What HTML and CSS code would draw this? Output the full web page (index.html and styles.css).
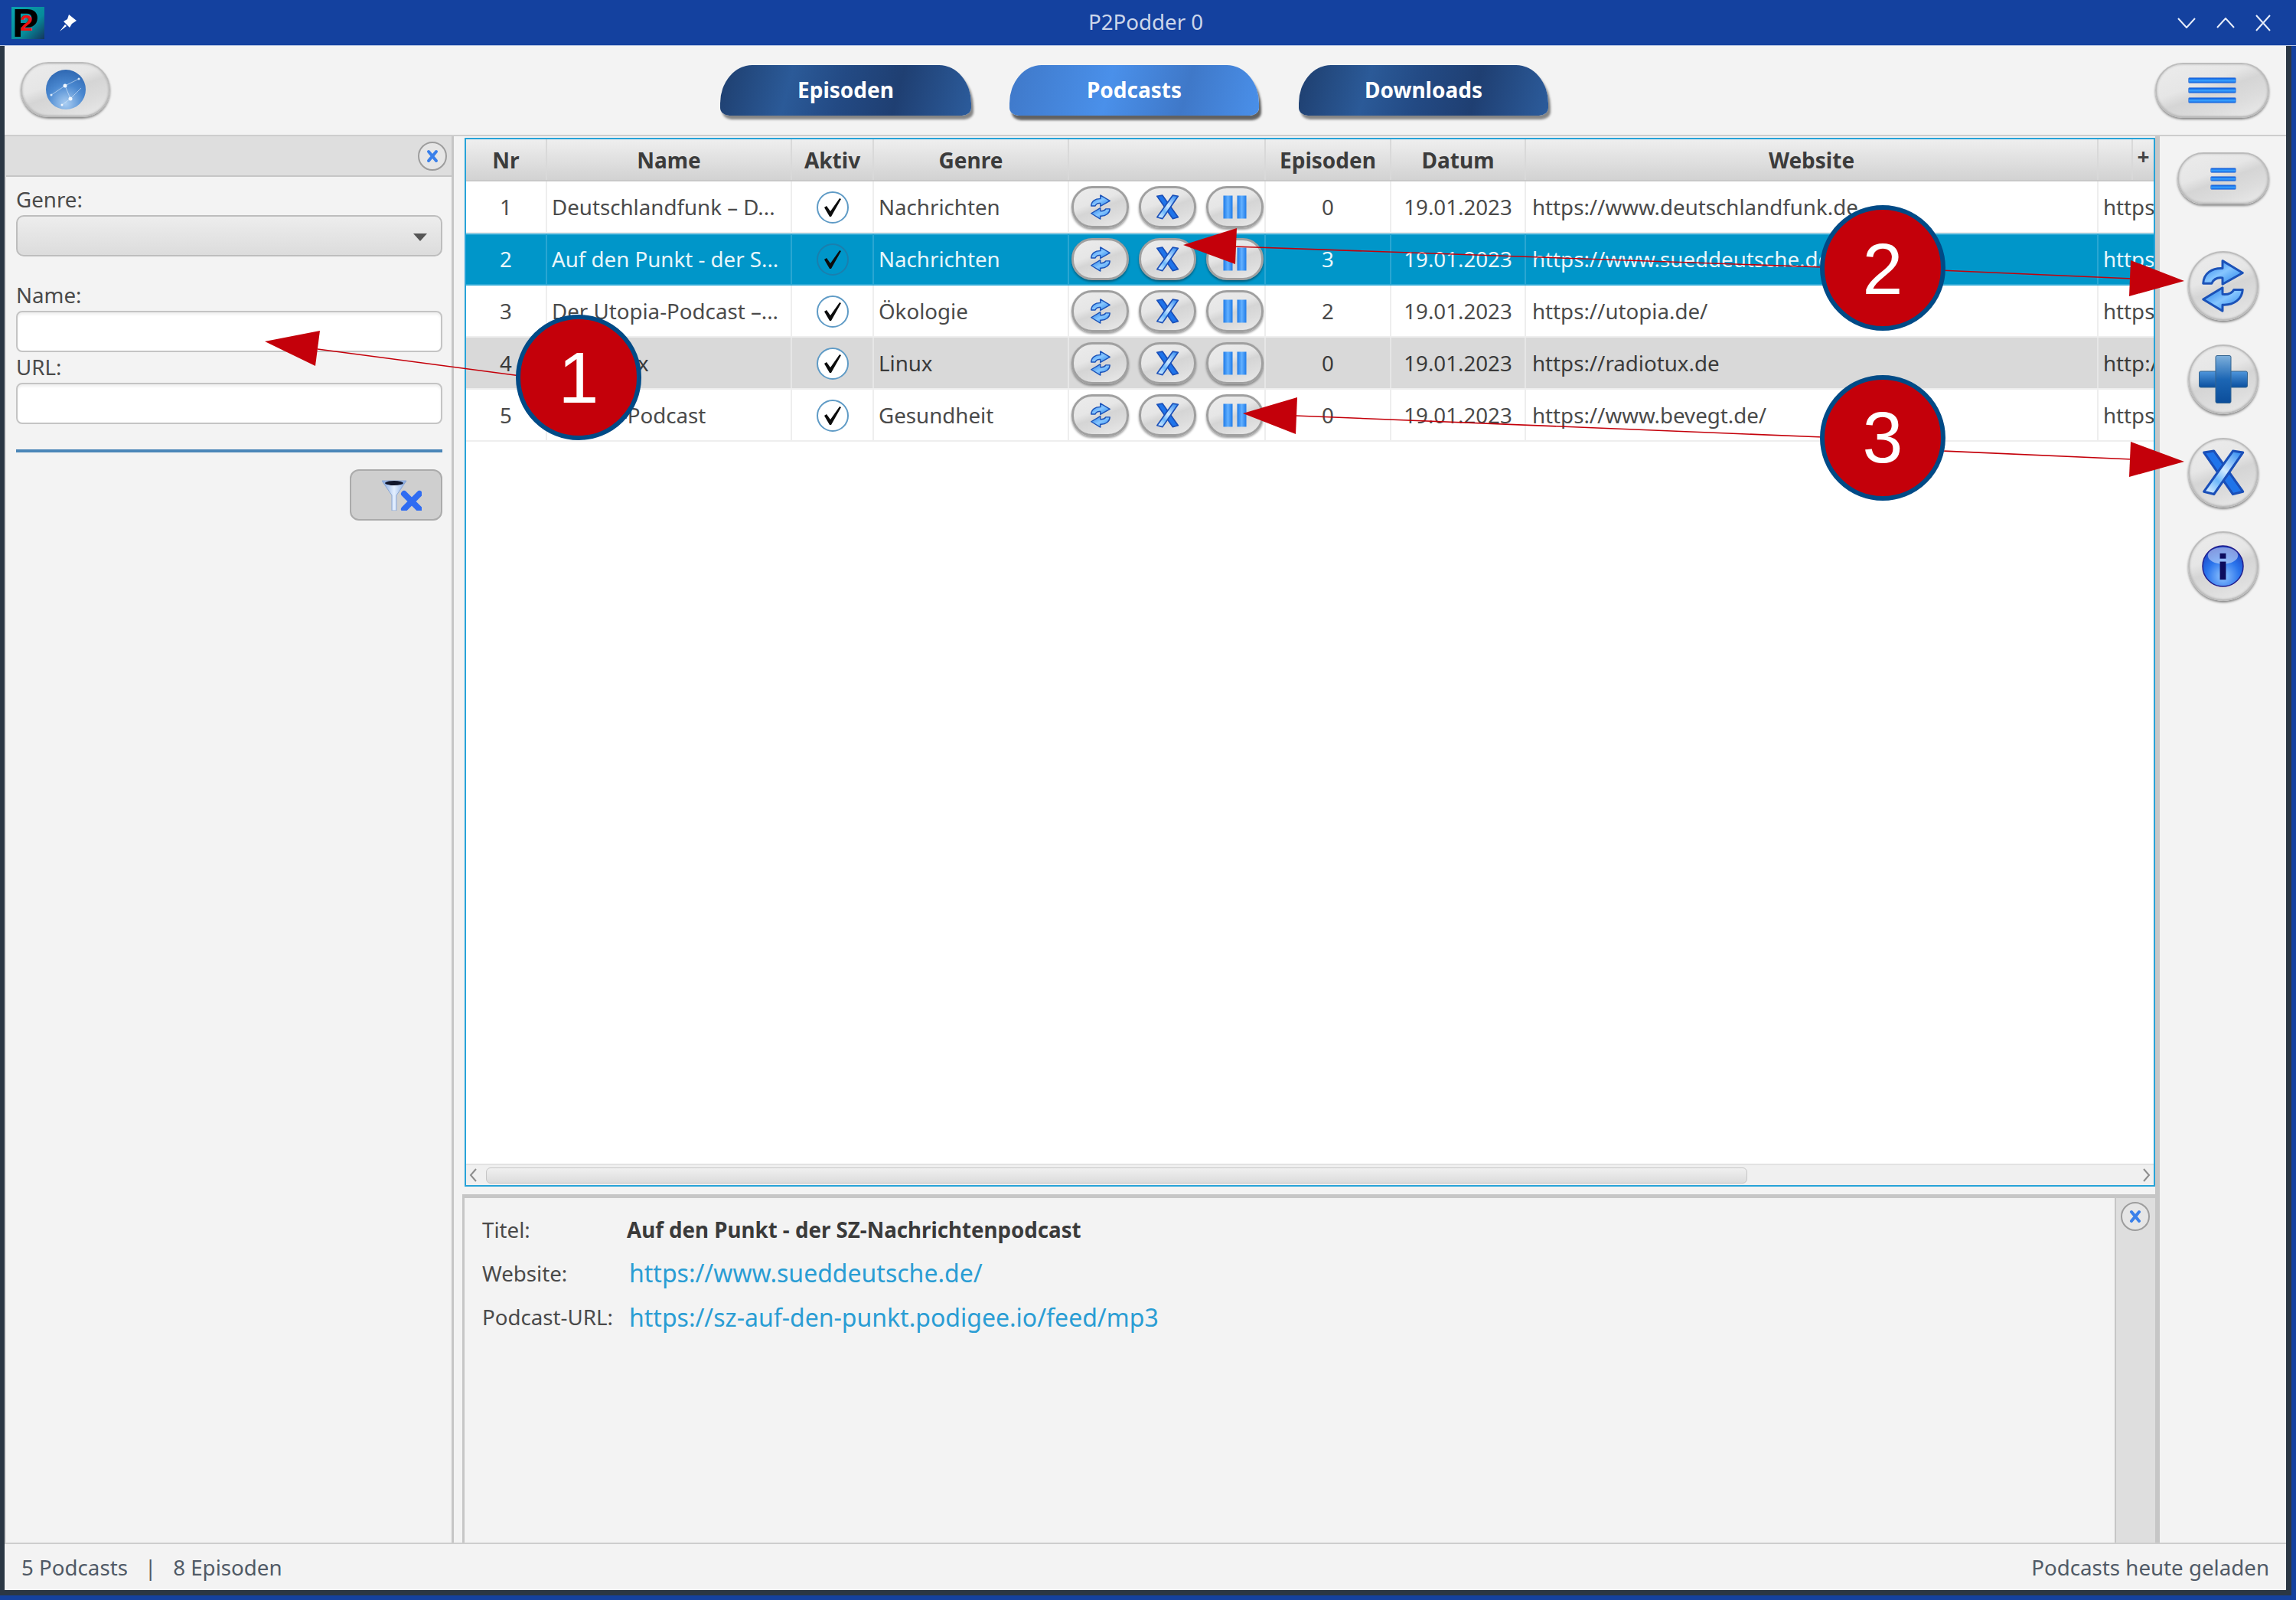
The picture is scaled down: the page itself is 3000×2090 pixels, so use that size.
FILE: index.html
```html
<!DOCTYPE html>
<html lang="de">
<head>
    <meta charset="UTF-8">
    <title>P2Podder 0</title>
    <link rel="stylesheet" href="styles.css">
</head>
<body>
    <!-- shared icons -->
    <svg class="icon-defs" aria-hidden="true">
        <defs>
            <linearGradient id="g-arrow" x1="0" y1="0" x2="1" y2="1">
                <stop offset="0" stop-color="#1f7ae8"/>
                <stop offset="0.5" stop-color="#86c6ff"/>
                <stop offset="1" stop-color="#1f7ee8"/>
            </linearGradient>
            <linearGradient id="g-x" gradientUnits="userSpaceOnUse" x1="145" y1="18" x2="22" y2="159">
                <stop offset="0" stop-color="#3f94f2"/>
                <stop offset="0.45" stop-color="#cfe9ff"/>
                <stop offset="0.7" stop-color="#6db8fb"/>
                <stop offset="1" stop-color="#d5ecff"/>
            </linearGradient>
            <linearGradient id="g-bar" x1="0" y1="0" x2="1" y2="0">
                <stop offset="0" stop-color="#1f7be8"/>
                <stop offset="0.5" stop-color="#62b0ff"/>
                <stop offset="1" stop-color="#1f7be8"/>
            </linearGradient>
            <linearGradient id="g-plus-h" x1="0" y1="0" x2="0" y2="1">
                <stop offset="0" stop-color="#4f96dc"/>
                <stop offset="1" stop-color="#0a4f9e"/>
            </linearGradient>
            <linearGradient id="g-plus-v" x1="0" y1="0" x2="0" y2="1">
                <stop offset="0" stop-color="#7eb0dc"/>
                <stop offset="0.5" stop-color="#1c66b4"/>
                <stop offset="1" stop-color="#0b4d9a"/>
            </linearGradient>
            <radialGradient id="g-info" cx="0.5" cy="0.75" r="0.75">
                <stop offset="0" stop-color="#8fc4ff"/>
                <stop offset="0.55" stop-color="#2a74ec"/>
                <stop offset="1" stop-color="#1b3fc0"/>
            </radialGradient>
            <radialGradient id="g-globe" cx="0.5" cy="0.85" r="0.85">
                <stop offset="0" stop-color="#a9cdf2"/>
                <stop offset="0.55" stop-color="#4a88d0"/>
                <stop offset="1" stop-color="#2f68b2"/>
            </radialGradient>
            <linearGradient id="g-logo" x1="0" y1="0" x2="1" y2="1">
                <stop offset="0" stop-color="#0aa3ad"/>
                <stop offset="0.6" stop-color="#078b9a"/>
                <stop offset="1" stop-color="#14345c"/>
            </linearGradient>
            <linearGradient id="g-funnel" x1="0" y1="0" x2="1" y2="0">
                <stop offset="0" stop-color="#7ea4e0"/>
                <stop offset="0.5" stop-color="#e4efff"/>
                <stop offset="1" stop-color="#7ea4e0"/>
            </linearGradient>
        </defs>
        <symbol id="ico-sync" viewBox="-5 -5 167 210">
            <path d="M77 0 L157 48 L77 93 L77 68 C55 65 42 72 34 90 L0 90 C2 50 35 28 77 30 Z" fill="url(#g-arrow)" stroke="#1b52b8" stroke-width="9" stroke-linejoin="round"/>
            <path d="M0 153 L77 107 L77 133 C100 135 115 128 122 115 L157 115 C155 150 125 178 77 175 L77 200 Z" fill="url(#g-arrow)" stroke="#1b52b8" stroke-width="9" stroke-linejoin="round"/>
        </symbol>
        <symbol id="ico-x" viewBox="0 0 167 177">
            <path d="M10 12 L48 6 L158 160 L120 170 Z" fill="#1f74ea" stroke="#1a4fb8" stroke-width="9" stroke-linejoin="round"/>
            <path d="M120 6 L158 12 L48 170 L10 160 Z" fill="url(#g-x)" stroke="#1a4fb8" stroke-width="9" stroke-linejoin="round"/>
        </symbol>
        <symbol id="ico-pause" viewBox="0 0 31 31">
            <rect x="0.5" y="0.5" width="12" height="30" fill="url(#g-bar)"/>
            <rect x="18.5" y="0.5" width="12" height="30" fill="url(#g-bar)"/>
        </symbol>
        <symbol id="ico-plus" viewBox="0 0 64 63">
            <rect x="0.5" y="21" width="63" height="21" rx="2" fill="url(#g-plus-h)" stroke="#35648f"/>
            <rect x="22" y="0.5" width="20" height="62" rx="2" fill="url(#g-plus-v)" stroke="#35648f"/>
        </symbol>
        <symbol id="ico-info" viewBox="0 0 56 56">
            <circle cx="28" cy="28" r="27" fill="url(#g-info)" stroke="#231e8c" stroke-width="1.5"/>
            <ellipse cx="28" cy="14" rx="20" ry="11" fill="#fff" opacity="0.45"/>
            <rect x="24" y="11" width="8" height="7" fill="#0c0c5e"/>
            <rect x="24" y="22" width="8" height="24" fill="#0c0c5e"/>
        </symbol>
        <symbol id="ico-close" viewBox="0 0 16 18">
            <path d="M3 3 L13 15 M13 3 L3 15" stroke="#3a80ea" stroke-width="4" stroke-linecap="round"/>
        </symbol>
        <symbol id="ico-check" viewBox="2 2 38 38">
            <path d="M10 21 L13 19 L18 26 L30 9 L32 10 L19 33 L17 33 Z" fill="#0c0c0c"/>
        </symbol>
    </svg>

    <div class="window">
        <header class="titlebar">
            <div class="titlebar-left">
                <svg class="logo" viewBox="0 0 43 42">
                    <rect width="43" height="42" fill="url(#g-logo)"/>
                    <text x="1" y="39" class="logo-p">P</text>
                    <text x="11" y="31" class="logo-2">2</text>
                </svg>
                <svg class="pin" viewBox="0 0 24 24">
                    <path d="M13 1 L23 9 L17 13 L14 18 L6 10 L11 7 Z M8 14 L1 23 L10 16 Z" fill="#fff"/>
                </svg>
            </div>
            <div class="window-title">P2Podder 0</div>
            <div class="window-controls">
                <svg viewBox="0 0 24 14"><path d="M1 1 L12 13 L23 1" /></svg>
                <svg viewBox="0 0 24 14"><path d="M1 13 L12 1 L23 13" /></svg>
                <svg viewBox="0 0 20 22"><path d="M1 1 L19 21 M19 1 L1 21" /></svg>
            </div>
        </header>

        <div class="frame">
            <div class="toolbar">
                <button class="gloss gloss-wide">
                    <svg class="globe" viewBox="0 0 52 52">
                        <circle cx="26" cy="26" r="26" fill="url(#g-globe)"/>
                        <path d="M7 33 L25 21 L32 38 L21 46 M25 21 L43 12 M32 38 L46 24" stroke="#dbe9fa" stroke-width="1" opacity="0.6" fill="none"/>
                        <circle cx="25" cy="21" r="2.5" fill="#f2f7fd"/>
                        <circle cx="32" cy="38" r="2.5" fill="#f2f7fd"/>
                        <circle cx="21" cy="46" r="1.5" fill="#f2f7fd"/>
                        <circle cx="7" cy="33" r="1.5" fill="#dce9f8"/>
                        <circle cx="43" cy="12" r="1.5" fill="#dce9f8"/>
                    </svg>
                </button>
                <nav class="tabs">
                    <button class="tab">Episoden</button>
                    <button class="tab tab-active">Podcasts</button>
                    <button class="tab tab-last">Downloads</button>
                </nav>
                <button class="gloss gloss-wide gloss-menu">
                    <span class="bars bars-big"><i></i><i></i><i></i></span>
                </button>
            </div>

            <div class="main">
                <aside class="filter">
                    <div class="panel-head">
                        <button class="close-btn"><svg><use href="#ico-close"/></svg></button>
                    </div>
                    <div class="filter-body">
                        <label class="field-label">Genre:</label>
                        <div class="combo"><span class="combo-arrow"></span></div>
                        <label class="field-label field-name">Name:</label>
                        <input class="text-input" type="text">
                        <label class="field-label field-url">URL:</label>
                        <input class="text-input" type="text">
                        <div class="separator"></div>
                        <button class="clear-filter">
                            <svg viewBox="0 0 52 40">
                                <path d="M0 1 H32 L19 20 V40 H13 V20 Z" fill="url(#g-funnel)" stroke="#8aa6d4"/>
                                <ellipse cx="16" cy="4" rx="12" ry="3" fill="#10162c"/>
                                <path d="M29 18 L49 38 M49 18 L29 38" stroke="#2f6cf2" stroke-width="8" stroke-linecap="round"/>
                            </svg>
                        </button>
                    </div>
                </aside>

                <section class="center">
                    <div class="table-box">
                        <div class="table-scroll">
                            <table class="podcasts">
                                <colgroup>
                                    <col class="c-nr"><col class="c-name"><col class="c-active"><col class="c-genre"><col class="c-actions">
                                    <col class="c-episodes"><col class="c-date"><col class="c-site"><col class="c-url"><col class="c-plus">
                                </colgroup>
                                <thead>
                                    <tr>
                                        <th>Nr</th><th>Name</th><th>Aktiv</th><th>Genre</th><th></th>
                                        <th>Episoden</th><th>Datum</th><th>Website</th><th></th><th class="th-plus">+</th>
                                    </tr>
                                </thead>
                                <tbody>
                                    <tr>
                                        <td class="num">1</td><td>Deutschlandfunk – D...</td>
                                        <td class="check"><span class="checkmark"><svg><use href="#ico-check"/></svg></span></td>
                                        <td>Nachrichten</td>
                                        <td class="actions"><div class="row-btns">
                                            <button class="gloss gloss-row"><svg class="i-sync"><use href="#ico-sync"/></svg></button>
                                            <button class="gloss gloss-row"><svg class="i-x"><use href="#ico-x"/></svg></button>
                                            <button class="gloss gloss-row"><svg class="i-pause"><use href="#ico-pause"/></svg></button>
                                        </div></td>
                                        <td class="num">0</td><td class="date">19.01.2023</td>
                                        <td class="site">https://www.deutschlandfunk.de</td><td class="last" colspan="2">https://www.deutschlandfunk.de/</td>
                                    </tr>
                                    <tr class="selected">
                                        <td class="num">2</td><td>Auf den Punkt - der S...</td>
                                        <td class="check"><span class="checkmark"><svg><use href="#ico-check"/></svg></span></td>
                                        <td>Nachrichten</td>
                                        <td class="actions"><div class="row-btns">
                                            <button class="gloss gloss-row"><svg class="i-sync"><use href="#ico-sync"/></svg></button>
                                            <button class="gloss gloss-row"><svg class="i-x"><use href="#ico-x"/></svg></button>
                                            <button class="gloss gloss-row"><svg class="i-pause"><use href="#ico-pause"/></svg></button>
                                        </div></td>
                                        <td class="num">3</td><td class="date">19.01.2023</td>
                                        <td class="site">https://www.sueddeutsche.de/</td><td class="last" colspan="2">https://sz-auf-den-punkt.podigee.io/feed/mp3</td>
                                    </tr>
                                    <tr>
                                        <td class="num">3</td><td>Der Utopia-Podcast –...</td>
                                        <td class="check"><span class="checkmark"><svg><use href="#ico-check"/></svg></span></td>
                                        <td>Ökologie</td>
                                        <td class="actions"><div class="row-btns">
                                            <button class="gloss gloss-row"><svg class="i-sync"><use href="#ico-sync"/></svg></button>
                                            <button class="gloss gloss-row"><svg class="i-x"><use href="#ico-x"/></svg></button>
                                            <button class="gloss gloss-row"><svg class="i-pause"><use href="#ico-pause"/></svg></button>
                                        </div></td>
                                        <td class="num">2</td><td class="date">19.01.2023</td>
                                        <td class="site">https://utopia.de/</td><td class="last" colspan="2">https://utopia.de/</td>
                                    </tr>
                                    <tr class="striped">
                                        <td class="num">4</td><td>Radio Tux</td>
                                        <td class="check"><span class="checkmark"><svg><use href="#ico-check"/></svg></span></td>
                                        <td>Linux</td>
                                        <td class="actions"><div class="row-btns">
                                            <button class="gloss gloss-row"><svg class="i-sync"><use href="#ico-sync"/></svg></button>
                                            <button class="gloss gloss-row"><svg class="i-x"><use href="#ico-x"/></svg></button>
                                            <button class="gloss gloss-row"><svg class="i-pause"><use href="#ico-pause"/></svg></button>
                                        </div></td>
                                        <td class="num">0</td><td class="date">19.01.2023</td>
                                        <td class="site">https://radiotux.de</td><td class="last" colspan="2">http://radiotux.de/</td>
                                    </tr>
                                    <tr>
                                        <td class="num">5</td><td>Bevegt-Podcast</td>
                                        <td class="check"><span class="checkmark"><svg><use href="#ico-check"/></svg></span></td>
                                        <td>Gesundheit</td>
                                        <td class="actions"><div class="row-btns">
                                            <button class="gloss gloss-row"><svg class="i-sync"><use href="#ico-sync"/></svg></button>
                                            <button class="gloss gloss-row"><svg class="i-x"><use href="#ico-x"/></svg></button>
                                            <button class="gloss gloss-row"><svg class="i-pause"><use href="#ico-pause"/></svg></button>
                                        </div></td>
                                        <td class="num">0</td><td class="date">19.01.2023</td>
                                        <td class="site">https://www.bevegt.de/</td><td class="last" colspan="2">https://www.bevegt.de/</td>
                                    </tr>
                                </tbody>
                            </table>
                        </div>
                        <div class="hbar">
                            <svg class="hbar-arrow" viewBox="0 0 12 20"><path d="M10 2 L3 10 L10 18"/></svg>
                            <div class="hbar-track"><div class="hbar-thumb"></div></div>
                            <svg class="hbar-arrow" viewBox="0 0 12 20"><path d="M2 2 L9 10 L2 18"/></svg>
                        </div>
                    </div>

                    <div class="details">
                        <div class="details-body">
                            <div class="details-grid">
                                <span>Titel:</span><strong>Auf den Punkt - der SZ-Nachrichtenpodcast</strong>
                                <span>Website:</span><a class="details-link">https://www.sueddeutsche.de/</a>
                                <span>Podcast-URL:</span><a class="details-link">https://sz-auf-den-punkt.podigee.io/feed/mp3</a>
                            </div>
                        </div>
                        <div class="details-strip">
                            <button class="close-btn"><svg><use href="#ico-close"/></svg></button>
                        </div>
                    </div>
                </section>

                <aside class="tools">
                    <button class="gloss gloss-strip"><span class="bars"><i></i><i></i><i></i></span></button>
                    <button class="gloss gloss-round gloss-first"><svg class="i-sync-big"><use href="#ico-sync"/></svg></button>
                    <button class="gloss gloss-round"><svg class="i-plus-big"><use href="#ico-plus"/></svg></button>
                    <button class="gloss gloss-round"><svg class="i-x-big"><use href="#ico-x"/></svg></button>
                    <button class="gloss gloss-round"><svg class="i-info-big"><use href="#ico-info"/></svg></button>
                </aside>
            </div>

            <footer class="status">
                <div class="status-left"><span>5 Podcasts</span><span>|</span><span>8 Episoden</span></div>
                <div>Podcasts heute geladen</div>
            </footer>
        </div>
    </div>

    <!-- red callouts lying over the window -->
    <svg class="callouts" viewBox="0 0 3000 2090">
        <g class="callout-lines">
            <path d="M415 456 L680 491"/>
            <path d="M1612 322 L2382 349"/>
            <path d="M2534 353 L2786 364"/>
            <path d="M1692 543 L2382 571"/>
            <path d="M2537 589 L2786 600"/>
        </g>
        <g class="callout-heads">
            <polygon points="346,446 418,432 412,478"/>
            <polygon points="1546,320 1616,298 1614,345"/>
            <polygon points="2854,367 2784,340 2782,387"/>
            <polygon points="1624,540 1695,519 1693,567"/>
            <polygon points="2854,603 2784,577 2782,623"/>
        </g>
        <g class="callout-dots">
            <circle cx="756" cy="493" r="79"/>
            <circle cx="2460" cy="350" r="79"/>
            <circle cx="2460" cy="572" r="79"/>
        </g>
        <g class="callout-nums">
            <text x="756" y="526">1</text>
            <text x="2460" y="384">2</text>
            <text x="2460" y="604">3</text>
        </g>
    </svg>
</body>
</html>
```

FILE: styles.css
```css
body {
    margin: 0;
    width: 3000px;
    height: 2090px;
    overflow: hidden;
    position: relative;
    font-family: "Noto Sans", sans-serif;
    font-size: 27.7px;
    color: #4a4a4a;
}
button {
    padding: 0;
    font-family: inherit;
}
.icon-defs {
    position: absolute;
    width: 0;
    height: 0;
}
.window {
    width: 3000px;
    height: 2090px;
    background: #14419f;
    display: flex;
    flex-direction: column;
}

/* title bar */
.titlebar {
    height: 59px;
    display: grid;
    grid-template-columns: 1fr auto 1fr;
    align-items: center;
    border-bottom: 1px solid #b9c7e4;
}
.titlebar-left {
    display: flex;
    align-items: center;
    padding-left: 15px;
    gap: 19px;
}
.logo {
    width: 43px;
    height: 42px;
}
.logo-p {
    font-family: "Liberation Sans", sans-serif;
    font-weight: bold;
    font-size: 52px;
    fill: #000;
}
.logo-2 {
    font-family: "Liberation Sans", sans-serif;
    font-weight: bold;
    font-size: 30px;
    fill: #f01010;
}
.pin {
    width: 24px;
    height: 24px;
}
.window-title {
    font-size: 27.7px;
    line-height: 54px;
    padding-bottom: 4px;
    margin-left: -6px;
    color: #ccd6ea;
}
.window-controls {
    display: flex;
    justify-content: flex-end;
    align-items: center;
    gap: 27px;
    padding-right: 33px;
}
.window-controls svg {
    width: 24px;
    height: 14px;
    fill: none;
    stroke: #e8eefa;
    stroke-width: 2;
}
.window-controls svg:last-child {
    width: 20px;
    height: 22px;
}

/* app frame */
.frame {
    flex: 1;
    margin: 0 6px 6px 0;
    border-left: 6px solid #2b3744;
    border-right: 7px solid #2b3744;
    border-bottom: 7px solid #2b3744;
    background: #f3f3f3;
    display: flex;
    flex-direction: column;
    min-height: 0;
}
.toolbar {
    height: 116px;
    box-sizing: border-box;
    display: flex;
    padding: 21px 22px 0 21px;
    flex-shrink: 0;
}

/* grey glossy buttons */
.gloss {
    display: flex;
    align-items: center;
    justify-content: center;
    box-sizing: border-box;
    flex-shrink: 0;
    border: 2px solid #bcbcbc;
    background: linear-gradient(160deg, #ececec 0%, #e6e6e6 38%, #d5d5d5 52%, #dcdcdc 72%, #ebebeb 100%);
    box-shadow: 0 2px 3px rgba(0, 0, 0, 0.45), inset 0 0 3px rgba(0, 0, 0, 0.2);
}
.gloss-wide {
    width: 117px;
    height: 72px;
    border-radius: 36px / 36px;
}
.gloss-menu {
    width: 149px;
    margin-left: auto;
    margin-top: 1px;
}
.gloss-strip {
    width: 120px;
    height: 68px;
    border-radius: 34px;
}
.gloss-round {
    width: 92px;
    height: 91px;
    border-radius: 50%;
    margin-top: 31px;
}
.gloss-row {
    width: 75px;
    height: 55px;
    border-radius: 27px;
    border: 3px solid #a0a0a0;
    box-shadow: 0 2px 3px rgba(0, 0, 0, 0.4);
}
.globe {
    width: 52px;
    height: 52px;
}
.bars {
    display: flex;
    flex-direction: column;
    gap: 4px;
    width: 34px;
}
.bars i {
    display: block;
    height: 7px;
    border-radius: 2px;
    background: linear-gradient(#0f5edc, #3aa2ff 55%, #1468e0);
    border: 1px solid #6d93d8;
    box-sizing: border-box;
}
.bars-big {
    width: 63px;
    gap: 5px;
}
.bars-big i {
    height: 8px;
}

/* top tabs */
.tabs {
    display: flex;
    gap: 50px;
    margin: 4px 0 0 797px;
}
.tab {
    width: 328px;
    height: 66px;
    border: none;
    border-radius: 42px 42px 12px 12px / 50px 50px 10px 10px;
    background: linear-gradient(105deg, #1e3e6e 0%, #2b5a98 28%, #234a84 48%, #1f3f72 70%, #2c5c9c 100%);
    box-shadow: 3px 5px 3px rgba(0, 0, 0, 0.45);
    color: #fff;
    font-size: 28px;
    font-weight: bold;
    line-height: 30px;
    padding-bottom: 3px;
}
.tab-active {
    width: 326px;
    margin-right: 2px;
    background: linear-gradient(105deg, #3f78c8 0%, #4a90ea 40%, #3f78c8 70%, #4a90ea 100%);
    box-shadow: 3px 6px 3px rgba(0, 0, 0, 0.6);
}
.tab-last {
    width: 326px;
}

.main {
    flex: 1;
    display: flex;
    min-height: 0;
    border-top: 2px solid #cdcdcd;
    border-bottom: 2px solid #cdcdcd;
}

/* left filter panel */
.filter {
    width: 587px;
    box-sizing: border-box;
    flex-shrink: 0;
    margin-right: 14px;
    border-right: 3px solid #c6c6c6;
    border-left: 2px solid #d8d8d8;
}
.panel-head {
    height: 53px;
    box-sizing: border-box;
    background: #dedede;
    border-bottom: 2px solid #c6c6c6;
    display: flex;
    align-items: center;
    justify-content: flex-end;
    padding-right: 6px;
}
.close-btn {
    width: 38px;
    height: 38px;
    border-radius: 50%;
    border: 2px solid #9d9d9d;
    background: #e6e6e6;
    display: flex;
    align-items: center;
    justify-content: center;
}
.close-btn svg {
    width: 16px;
    height: 18px;
}
.filter-body {
    display: flex;
    flex-direction: column;
    padding: 12px 12px 0 13px;
}
.field-label {
    height: 38px;
    line-height: 35px;
}
.field-name {
    margin-top: 33px;
}
.field-url {
    margin-top: 2px;
}
.combo {
    height: 54px;
    box-sizing: border-box;
    border: 2px solid #bdbdbd;
    border-radius: 10px;
    background: linear-gradient(#ededed, #dcdcdc);
    position: relative;
}
.combo-arrow {
    position: absolute;
    right: 18px;
    top: 22px;
    border-left: 9px solid transparent;
    border-right: 9px solid transparent;
    border-top: 10px solid #555;
}
.text-input {
    height: 54px;
    box-sizing: border-box;
    width: 100%;
    border: 2px solid #c4c4c4;
    border-radius: 8px;
    background: #fff;
    box-shadow: inset 0 3px 3px rgba(0, 0, 0, 0.06);
}
.separator {
    height: 4px;
    margin-top: 33px;
    background: #4a86b8;
}
.clear-filter {
    width: 121px;
    height: 67px;
    margin: 22px 0 0 auto;
    border: 2px solid #ababab;
    border-radius: 12px;
    background: #cfcfcf;
    display: flex;
    align-items: center;
    justify-content: center;
}
.clear-filter svg {
    width: 52px;
    height: 40px;
    margin-left: 14px;
}

/* table */
.center {
    width: 2215px;
    flex-shrink: 0;
    display: flex;
    flex-direction: column;
    border-right: 6px solid #c6c6c6;
    box-sizing: border-box;
}
.table-box {
    height: 1370px;
    margin-top: 2px;
    box-sizing: border-box;
    border: 2px solid #27a3d8;
    background: #fff;
    display: flex;
    flex-direction: column;
    flex-shrink: 0;
}
.table-scroll {
    flex: 1;
    overflow: hidden;
}
.podcasts {
    table-layout: fixed;
    width: 2205px;
    border-collapse: collapse;
}
.c-nr { width: 105px; }
.c-name { width: 320px; }
.c-active { width: 107px; }
.c-genre { width: 255px; }
.c-actions { width: 257px; }
.c-episodes { width: 164px; }
.c-date { width: 176px; }
.c-site { width: 748px; }
.c-url { width: 45px; }
.c-plus { width: 28px; }
.podcasts th {
    height: 54px;
    padding: 0;
    box-sizing: border-box;
    font-size: 28px;
    font-weight: bold;
    color: #3c3c3c;
    background: linear-gradient(#efefef, #d2d2d2);
    border-right: 2px solid #d9d9d9;
    border-bottom: 2px solid #c8c8c8;
}
.podcasts .th-plus {
    color: #444;
    font-size: 28px;
    vertical-align: top;
    line-height: 44px;
    border-right: none;
}
.podcasts td {
    height: 66px;
    padding: 0 0 0 6px;
    font-size: 27.7px;
    white-space: nowrap;
    overflow: hidden;
    border-right: 2px solid #eeeeee;
    border-bottom: 2px solid #eeeeee;
}
.podcasts .num {
    padding: 0;
    text-align: center;
}
.podcasts .date {
    padding: 0;
    text-align: center;
}
.podcasts .check {
    padding: 0;
    text-align: center;
}
.podcasts .actions {
    padding: 0;
}
.podcasts .site {
    padding-left: 8px;
}
.podcasts .last {
    padding-left: 6px;
    border-right: none;
}
.row-btns {
    display: flex;
    gap: 13px;
    padding-left: 3px;
}
.checkmark {
    display: inline-flex;
    vertical-align: middle;
    width: 42px;
    height: 42px;
    box-sizing: border-box;
    border-radius: 50%;
    border: 2px solid #5f9bc6;
    background: #fff;
}
.checkmark svg {
    width: 38px;
    height: 38px;
}
.striped td {
    background: #d9d9d9;
    color: #3a3a3a;
    border-right-color: #e6e6e6;
}
.selected td {
    background: #0096c9;
    color: #e8f6fb;
    border-right-color: #2aa6d2;
    border-bottom-color: #30aad6;
    box-shadow: inset 0 2px 0 #30aad6;
}
.selected .checkmark {
    background: none;
    border-color: #1a7fae;
}
.i-sync { width: 26px; height: 33px; }
.i-x { width: 31px; height: 33px; }
.i-pause { width: 31px; height: 31px; }
.i-sync-big { width: 55px; height: 69px; }
.i-x-big { width: 58px; height: 61px; }
.i-plus-big { width: 64px; height: 63px; }
.i-info-big { width: 55px; height: 55px; }

/* horizontal scrollbar */
.hbar {
    height: 28px;
    flex-shrink: 0;
    display: flex;
    align-items: center;
    gap: 4px;
    padding: 0 3px;
    background: #f0f0f0;
    border-top: 2px solid #e2e2e2;
    box-sizing: border-box;
}
.hbar-arrow {
    width: 12px;
    height: 20px;
    flex-shrink: 0;
    fill: none;
    stroke: #8c8c8c;
    stroke-width: 2;
}
.hbar-track {
    flex: 1;
    padding-left: 7px;
}
.hbar-thumb {
    width: 1648px;
    height: 21px;
    box-sizing: border-box;
    border: 1px solid #c6c6c6;
    border-radius: 6px;
    background: linear-gradient(#f0f0f0, #dcdcdc);
}

/* details */
.details {
    flex: 1;
    min-height: 0;
    margin: 10px 0 0 -3px;
    border-top: 5px solid #c6c6c6;
    border-left: 3px solid #c6c6c6;
    display: flex;
}
.details-body {
    flex: 1;
    padding: 13px 0 0 23px;
}
.details-grid {
    display: grid;
    grid-template-columns: 189px auto;
    grid-template-rows: 56px 57px 58px;
    align-items: center;
    justify-content: start;
}
.details-grid strong {
    color: #3a3a3a;
    font-size: 27.7px;
}
.details-link {
    color: #2a9dd4;
    font-size: 32px;
    margin-left: 3px;
}
.details-strip {
    width: 53px;
    flex-shrink: 0;
    box-sizing: border-box;
    background: #dedede;
    border-left: 2px solid #c6c6c6;
    padding: 5px 0 0 6px;
}

/* right tool column */
.tools {
    flex: 1;
    display: flex;
    flex-direction: column;
    align-items: center;
    padding-top: 21px;
}
.tools .gloss-first {
    margin-top: 61px;
}

/* status bar */
.status {
    height: 60px;
    flex-shrink: 0;
    display: flex;
    justify-content: space-between;
    align-items: center;
    padding: 0 22px;
    color: #505a66;
}
.status-left {
    display: flex;
    gap: 22px;
}

/* callouts */
.callouts {
    position: absolute;
    left: 0;
    top: 0;
    width: 3000px;
    height: 2090px;
}
.callout-lines path {
    fill: none;
    stroke: #c4000a;
    stroke-width: 1.6;
}
.callout-heads polygon {
    fill: #c4000a;
}
.callout-dots circle {
    fill: #c4000a;
    stroke: #004a86;
    stroke-width: 6;
}
.callout-nums text {
    fill: #fff;
    font-family: "Liberation Sans", sans-serif;
    font-size: 95px;
    text-anchor: middle;
}
```
